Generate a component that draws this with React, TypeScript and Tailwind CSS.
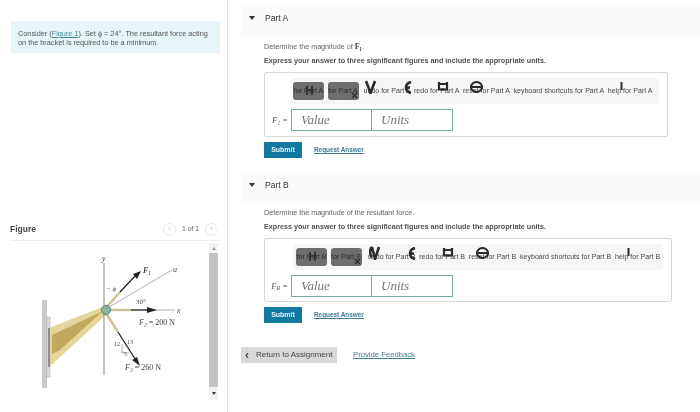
import React from "react";

function Glyph({ d, className, w = 12, h = 18, sw = 2.2 }: { d: string; className: string; w?: number; h?: number; sw?: number }) {
  return (
    <svg width={w} height={h} viewBox={`0 0 ${w} ${h}`} fill="none" stroke="#2b2b2b" strokeWidth={sw} className={`absolute ${className}`}>
      <path d={d} />
    </svg>
  );
}

function Tool({ children, glyph }: { children: string; glyph?: React.ReactNode }) {
  return (
    <span className="relative whitespace-nowrap">
      {children}
      {glyph}
    </span>
  );
}

function Part({
  name,
  determine,
  symbol,
  second,
}: {
  name: string;
  determine: React.ReactNode;
  symbol: React.ReactNode;
  second?: boolean;
}) {
  const p = `for Part ${name}`;
  return (
    <section>
      <div className={second ? "flex h-[31px] items-center bg-[#fafafa] pb-[5px]" : "flex h-[32px] items-center bg-[#fafafa] pb-[6px]"}>
        <svg width="6" height="4" viewBox="0 0 6 4" className="ml-[8px]">
          <path d="M0 0h6L3 4z" fill="#333" />
        </svg>
        <span className="ml-[10px] text-[8.5px] text-[#333]">Part {name}</span>
      </div>
      <div className="pl-[23px]">
        <p className="mt-[5px] flex h-[10px] items-center text-[7.2px] text-[#5f5f5f]">{determine}</p>
        <p className="mt-[4px] h-[10px] text-[7.2px] font-bold leading-[10px] text-[#505050]">
          Express your answer to three significant figures and include the appropriate units.
        </p>
        <div className={second ? "mt-[6px] h-[64px] w-[408px] rounded-[2px] border border-[#d8d8d8] bg-white" : "mt-[6px] h-[65px] w-[404px] rounded-[2px] border border-[#d8d8d8] bg-white"}>
          <div className={second ? "ml-[28px] mr-[8px] mt-[5px] flex h-[26px] items-center gap-[3.5px] rounded-[3px] bg-[#f6f6f6] pl-[3px] text-[7.05px] text-[#484848]" : "ml-[26px] mr-[8px] mt-[5px] flex h-[26px] items-center gap-[3.5px] rounded-[3px] bg-[#f6f6f6] pl-[2px] text-[7.05px] text-[#484848]"}>
            <span className="relative flex h-[18px] w-[31px] items-center justify-center overflow-hidden whitespace-nowrap rounded-[3px] bg-[#6e6e6e] text-[#2e2e2e]">
              {p}
              <Glyph className="left-[12px] top-[3px]" w={9} h={11} sw={1.6} d="M2 1v9M7 1v9M2 5h5" />
            </span>
            <span className="relative flex h-[18px] w-[31px] items-center justify-center overflow-hidden whitespace-nowrap rounded-[3px] bg-[#6e6e6e] text-[#2e2e2e]">
              {p}
              <Glyph className="left-[23px] top-[10px]" w={7} h={7} sw={1.2} d="M1 1l5 5M6 1L1 6" />
            </span>
            <span className={second ? "ml-[3px] flex gap-[3.8px]" : "ml-[1.5px] flex gap-[3.5px]"}>
              <Tool
                glyph={
                  <>
                    <Glyph className="left-[1px] -top-[6px]" w={12} h={14} sw={2.6} d={second ? "M3 1C0 4 1 10 3 11M3 1l3 12 4-12" : "M1 1l4.5 12L10 1"} />
                    <Glyph className="left-[40px] -top-[5px]" w={8} h={13} sw={2.6} d="M7 1C3 2 2 4 2 6.5S3 11 7 12M2 6.5h4" />
                  </>
                }
              >{`undo ${p}`}</Tool>
              <Tool glyph={<Glyph className="left-[23px] -top-[5px]" w={12} h={10} sw={2.2} d="M2 1v8M10 1v8M1 8.5h10M2 3h8" />}>{`redo ${p}`}</Tool>
              <Tool glyph={<Glyph className="left-[7px] -top-[5px]" w={13} h={12} sw={2.1} d="M6.5 1a5.5 5 0 1 0 .01 0zM1 6h11" />}>{`reset ${p}`}</Tool>
              <Tool>{`keyboard shortcuts ${p}`}</Tool>
              <Tool glyph={<Glyph className="left-[12px] -top-[4px]" w={3} h={8} sw={2} d="M1.5 0v8" />}>{`help ${p}`}</Tool>
            </span>
          </div>
          <div className="mt-[5px] flex items-center">
            <span className="flex w-[26px] justify-end pr-[3px] font-['Liberation_Serif',serif] text-[8.5px] italic text-[#555]">{symbol}</span>
            <div className="flex h-[22px] w-[162px] font-['Liberation_Serif',serif] text-[13px] italic text-[#777]">
              <div className="flex w-[81px] items-center border-[1.5px] border-[#76aaa8] pl-[9px]">Value</div>
              <div className="flex w-[81px] items-center border-[1.5px] border-l-0 border-[#76aaa8] pl-[9px]">Units</div>
            </div>
          </div>
        </div>
        <div className="mt-[5px] flex items-center">
          <span className="flex h-[16px] w-[38px] items-center justify-center bg-[#127a9e] text-[7px] font-bold text-[#e8f4f8]">Submit</span>
          <span className="ml-[12px] text-[6.4px] font-bold text-[#3d7a99] underline">Request Answer</span>
        </div>
      </div>
    </section>
  );
}

function Figure() {
  return (
    <svg width="198" height="157" viewBox="0 243 198 157" className="shrink-0">
      <rect x="42" y="300" width="5" height="88" fill="#c6cacd" />
      <rect x="47" y="317" width="3" height="60" fill="#dcdcdc" stroke="#aaa" strokeWidth="0.5" />
      <polygon points="49,328 105,306 106,315 49,367" fill="#e4d59c" />
      <polygon points="52,335 103,311 60,350 52,354" fill="#c2a75e" />
      <path d="M49 328V367" stroke="#444" strokeWidth="1" />
      <path d="M104 263V375" stroke="#808080" strokeWidth="0.9" />
      <path d="M104 310L172 270" stroke="#a0a0a0" strokeWidth="0.8" />
      <path d="M106 310H175" stroke="#a0a0a0" strokeWidth="0.8" />
      <path d="M104 310H131" stroke="#cfc097" strokeWidth="2.4" />
      <path d="M104 310L120 292" stroke="#cfc097" strokeWidth="2.4" />
      <path d="M120 292L136 275" stroke="#222" strokeWidth="1.3" />
      <polygon points="141,271 133,274 137,279" fill="#222" />
      <path d="M131 310H152" stroke="#222" strokeWidth="1.2" />
      <polygon points="157,310 147,307 147,313" fill="#222" />
      <path d="M104 310L118 332" stroke="#cfc097" strokeWidth="2.4" />
      <path d="M118 332L137 362" stroke="#222" strokeWidth="1.3" />
      <polygon points="140,366 132,360 137,357" fill="#222" />
      <circle cx="106" cy="310" r="4.5" fill="#8fb5a0" stroke="#4c8a78" strokeWidth="1" />
      <path d="M122 344v9h7" stroke="#777" strokeWidth="0.6" fill="none" />
      <g fontFamily="'Liberation Serif',serif" fill="#444" fontSize="8">
        <text x="102" y="261" fontStyle="italic">y</text>
        <text x="173" y="272" fontStyle="italic">u</text>
        <text x="177" y="313" fontStyle="italic">x</text>
        <text x="106" y="291" fontSize="7" fontStyle="italic">− ϕ</text>
        <text x="136" y="304" fontSize="7">30°</text>
        <text x="143" y="273" fontWeight="bold" fontStyle="italic">F₁</text>
        <text x="139" y="325" fontStyle="italic">F₂ <tspan fontStyle="normal">= 200 N</tspan></text>
        <text x="125" y="370" fontStyle="italic">F₃ <tspan fontStyle="normal">= 260 N</tspan></text>
        <text x="114" y="346" fontSize="6">12</text>
        <text x="127" y="344" fontSize="6">13</text>
        <text x="124" y="356" fontSize="6">5</text>
      </g>
    </svg>
  );
}

export default function App() {
  return (
    <div className="flex h-[412px] w-[700px] overflow-hidden bg-white font-['Liberation_Sans',Arial,sans-serif] blur-[0.4px]">
      <aside className="flex h-full w-[228px] shrink-0 flex-col border-r border-[#e4e8ea] pl-[11px] pr-[7px] pt-[21px]">
        <div className="h-[32px] bg-[#e8f5f8] pl-[7px] pt-[8px] text-[7.3px] leading-[9px] text-[#555]">
          Consider (<span className="text-[#3d8aa5] underline">Figure 1</span>). Set ϕ = 24°. The resultant force acting
          <br />
          on the bracket is required to be a minimum.
        </div>
        <div className="-ml-[1px] mt-[168px] flex h-[20px] items-center justify-between border-b border-[#eeeeee] pb-[3px] pr-[2px]">
          <span className="text-[8.5px] font-bold text-[#444]">Figure</span>
          <div className="flex items-center gap-[6px] text-[6.8px] text-[#666]">
            <span className="flex h-[13px] w-[13px] items-center justify-center rounded-full border border-[#e8e8e8] text-[9px] text-[#bbb]">‹</span>
            <span>1 of 1</span>
            <span className="flex h-[13px] w-[13px] items-center justify-center rounded-full border border-[#e8e8e8] text-[9px] text-[#bbb]">›</span>
          </div>
        </div>
        <div className="-ml-[11px] mt-[2px] flex">
          <Figure />
          <div className="ml-[11px] flex h-[157px] w-[9px] flex-col items-center bg-[#f2f2f2]">
            <span className="mt-[4px] h-0 w-0 border-x-[2px] border-b-[3px] border-x-transparent border-b-[#999]" />
            <span className="mt-[3px] h-[134px] w-full bg-[#c4c4c4]" />
            <span className="mt-[5px] h-0 w-0 border-x-[2px] border-t-[3px] border-x-transparent border-t-[#333]" />
          </div>
        </div>
      </aside>
      <main className="min-w-0 flex-1 pl-[13px] pt-[5px]">
        <Part
          name="A"
          determine={
            <>
              Determine the magnitude of <b className="ml-[2px] font-['Liberation_Serif',serif] text-[8px] text-[#444]">F₁</b>.
            </>
          }
          symbol={<span>F₁ =</span>}
        />
        <div className="h-[14px]" />
        <Part
          name="B"
          second
          determine={<>Determine the magnitude of the resultant force.</>}
          symbol={<span>F<sub className="text-[6px]">R</sub> =</span>}
        />
        <div className="mt-[24px] flex items-center">
          <span className="flex h-[16px] w-[96px] items-center bg-[#d9d9d9] pl-[4px] text-[8px] text-[#444]">
            <b className="w-[11px] text-[12px] leading-none">‹</b>Return to Assignment
          </span>
          <span className="ml-[16px] text-[7.7px] text-[#3d7f96] underline">Provide Feedback</span>
        </div>
      </main>
    </div>
  );
}
